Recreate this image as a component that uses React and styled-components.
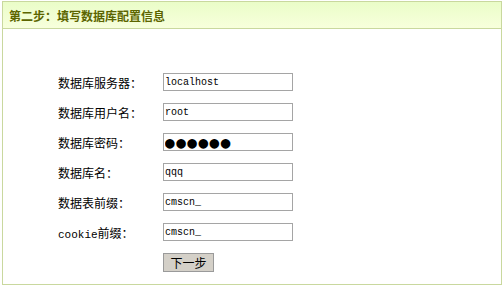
import React from "react";
import styled, { createGlobalStyle } from "styled-components";

const GlobalStyle = createGlobalStyle`
    body {
        margin: 0;
        background: #fff;
        font-family: "Noto Sans CJK SC", "Liberation Sans", sans-serif;
    }
`

export const Panel = styled.div`
    margin: 1px 0 0 2px;
    width: 498px;
    height: 282px;
    border: 1px solid #c9d89e;
    display: flex;
    flex-direction: column;
`

export const Header = styled.div`
    height: 26px;
    border-bottom: 1px solid #c9d89e;
    background: linear-gradient(#eafdc8, #f7ffdc);
    display: flex;
    align-items: center;
    padding-left: 6px;
    font-size: 12px;
    font-weight: bold;
    color: #5c6500;
`

export const Form = styled.div`
    display: grid;
    grid-template-columns: 105px 130px;
    grid-auto-rows: 30px;
    align-items: center;
    padding: 38px 0 0 55px;
`

export const Label = styled.label`
    font-size: 12px;
    color: #000;
`

export const Latin = styled.span`
    font-family: "Liberation Mono", monospace;
    font-size: 11px;
`

export const Field = styled.input`
    box-sizing: border-box;
    width: 130px;
    height: 18px;
    border: 1px solid #a5a5a5;
    padding: 0 1px;
    font-family: ${p => (p.$dots ? "\"DejaVu Sans Mono\"" : "\"Liberation Mono\"")}, monospace;
    font-size: ${p => (p.$dots ? "16px" : "10px")};
    line-height: 16px;
    letter-spacing: ${p => (p.$dots ? "1.5px" : "0")};
    color: #000;
    outline: none;
`

export const Button = styled.button`
    grid-column: 2;
    justify-self: start;
    width: 51px;
    height: 19px;
    padding: 0;
    background: #d4d0c8;
    border: 1px solid #9a9a9a;
    font-family: "Noto Sans CJK SC", sans-serif;
    font-size: 12px;
    line-height: 17px;
    color: #000;
`

const rows = [
    [<>数据库服务器：</>, "localhost"],
    [<>数据库用户名：</>, "root"],
    [<>数据库密码：</>, "●●●●●●", true],
    [<>数据库名：</>, "qqq"],
    [<>数据表前缀：</>, "cmscn_"],
    [<><Latin>cookie</Latin>前缀：</>, "cmscn_"],
]

export default function App() {
    return <>
        <GlobalStyle />
        <Panel>
            <Header>第二步：填写数据库配置信息</Header>
            <Form>
                {rows.map(([label, value, dots], i) => (
                    <React.Fragment key={i}>
                        <Label>{label}</Label>
                        <Field type="text" defaultValue={value} $dots={dots} />
                    </React.Fragment>
                ))}
                <Button>下一步</Button>
            </Form>
        </Panel>
    </>
}
